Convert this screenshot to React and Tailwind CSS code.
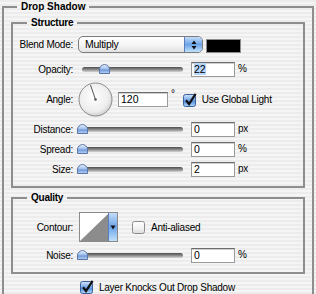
function Thumb({ left }) {
  return (
    <svg
      className="absolute top-[2px]"
      style={{ left }}
      width="11"
      height="10"
      viewBox="0 0 11 10"
    >
      <defs>
        <linearGradient id="thumb" x1="0" y1="0" x2="0" y2="1">
          <stop offset="0" stopColor="#eef4fc" />
          <stop offset="0.5" stopColor="#9dbdec" />
          <stop offset="0.6" stopColor="#6f98d8" />
          <stop offset="1" stopColor="#bcd6f6" />
        </linearGradient>
      </defs>
      <path
        d="M5.5 0.5 C8 0.5 10.5 3 10.5 5 V9.5 H0.5 V5 C0.5 3 3 0.5 5.5 0.5 Z"
        fill="url(#thumb)"
        stroke="#5a76a6"
      />
    </svg>
  );
}

function Slider({ value = 0 }) {
  return (
    <div className="relative ml-[4px] h-[15px] w-[111px] shrink-0">
      <div className="absolute left-[5px] right-[5px] top-[5px] h-[5px] rounded-full bg-gradient-to-b from-[#4e4e4e] via-[#8a8a8a] to-[#d6d6d6]" />
      <Thumb left={value} />
    </div>
  );
}

function Field({ value, w = "w-[44px]", selected, className = "" }) {
  return (
    <div
      className={`h-[15px] shrink-0 border border-[#9a9a9a] border-t-[#6c6c6c] bg-white pl-[2px] text-[10.5px] leading-[13px] tracking-normal text-black shadow-[inset_0_1px_0_#cfcfcf] ${w} ${className}`}
    >
      {selected ? <span className="bg-[#b5d5fd]">{value}</span> : value}
    </div>
  );
}

function Check({ checked, className = "" }) {
  return (
    <svg className={`shrink-0 ${className}`} width="14" height="14" viewBox="0 0 14 14">
      <defs>
        <linearGradient id="cbon" x1="0" y1="0" x2="0" y2="1">
          <stop offset="0" stopColor="#d3e5fb" />
          <stop offset="0.5" stopColor="#6fa3e6" />
          <stop offset="0.55" stopColor="#4f8ad9" />
          <stop offset="1" stopColor="#b4dafb" />
        </linearGradient>
        <linearGradient id="cboff" x1="0" y1="0" x2="0" y2="1">
          <stop offset="0" stopColor="#ffffff" />
          <stop offset="0.55" stopColor="#f2f2f2" />
          <stop offset="1" stopColor="#dcdcdc" />
        </linearGradient>
      </defs>
      <rect
        x="0.5"
        y="1.5"
        width="12"
        height="12"
        rx="2"
        fill={checked ? "url(#cbon)" : "url(#cboff)"}
        stroke={checked ? "#3d5f99" : "#8c8c8c"}
      />
      {checked && (
        <path d="M3 7.2 L6 11 L12.6 0.8" fill="none" stroke="#111" strokeWidth="2.2" />
      )}
    </svg>
  );
}

function Row({ label, className = "", children }) {
  return (
    <div className={`flex items-center ${className}`}>
      <span className="w-[60px] shrink-0 text-right">{label}</span>
      {children}
    </div>
  );
}

function Dial() {
  return (
    <svg className="ml-[5px] shrink-0" width="35" height="35" viewBox="0 0 35 35">
      <defs>
        <radialGradient id="dial" cx="0.45" cy="0.42" r="0.6">
          <stop offset="0" stopColor="#ffffff" />
          <stop offset="0.75" stopColor="#ededed" />
          <stop offset="1" stopColor="#cbcbcb" />
        </radialGradient>
      </defs>
      <circle cx="17.5" cy="17.5" r="16.5" fill="url(#dial)" stroke="#8a8a8a" />
      <line x1="17.5" y1="17.5" x2="12.5" y2="3" stroke="#555" strokeWidth="1" />
      <circle cx="17.5" cy="17.5" r="1.3" fill="#555" />
    </svg>
  );
}

function Popup() {
  return (
    <div className="ml-[5px] flex h-[17px] w-[125px] shrink-0 overflow-hidden rounded-[5px] border border-[#7c7c7c] bg-gradient-to-b from-white via-[#f6f6f6] to-[#e2e2e2]">
      <span className="flex-1 pl-[6px] text-[10.5px] leading-[15px]">Multiply</span>
      <span className="flex w-[18px] items-center justify-center border-l border-[#5a7fbd] bg-gradient-to-b from-[#c4ddf8] via-[#6ba3e8] to-[#c0e2fb]">
        <svg width="6" height="10" viewBox="0 0 6 10">
          <path d="M3 0.5 L5.5 4 H0.5 Z M3 9.5 L5.5 6 H0.5 Z" fill="#111" />
        </svg>
      </span>
    </div>
  );
}

function Contour() {
  return (
    <div className="ml-[6px] flex h-[30px] w-[39px] shrink-0 border border-[#8a8a8a]">
      <svg width="28" height="28" viewBox="0 0 28 28">
        <rect width="28" height="28" fill="#fff" />
        <path d="M0 28 L28 1 V28 Z" fill="#8c8c8c" />
      </svg>
      <span className="flex flex-1 items-center justify-center border-l border-[#5a7fbd] bg-gradient-to-b from-[#c4ddf8] via-[#6ba3e8] to-[#c0e2fb]">
        <svg width="6" height="5" viewBox="0 0 6 5">
          <path d="M0.5 0.5 H5.5 L3 4.5 Z" fill="#111" />
        </svg>
      </span>
    </div>
  );
}

export default function App() {
  return (
    <div className="h-[294px] w-[316px] overflow-hidden bg-[repeating-linear-gradient(180deg,#ececec_0px,#ececec_2px,#f5f5f5_2px,#f5f5f5_4px)] font-['Lucida_Grande','Liberation_Sans',Arial,sans-serif] text-[10px] leading-[13px] tracking-[-0.25px] text-black">
      <fieldset className="ml-[2px] h-[320px] w-[312px] border-2 border-b-0 border-[#8e8e8e] px-[7px] pt-[3px]">
        <legend className="ml-[6px] px-[4px] font-bold leading-[13px] tracking-normal">Drop Shadow</legend>

        <fieldset className="border-2 border-[#8e8e8e] pb-[9px] pt-[7px]">
          <legend className="ml-[14px] px-[4px] font-bold leading-[13px]">Structure</legend>

          <Row label="Blend Mode:" className="h-[17px]">
            <Popup />
            <div className="ml-[3px] mt-[3px] h-[14px] w-[35px] border border-[#8c8c8c] bg-black" />
          </Row>

          <Row label="Opacity:" className="mt-[9px] h-[15px]">
            <Slider value={22} />
            <Field value="22" selected className="ml-[3px]" />
            <span className="ml-[3px] -mt-[3px]">%</span>
          </Row>

          <Row label="Angle:" className="mt-[5px] h-[35px]">
            <Dial />
            <Field value="120" w="w-[50px]" className="ml-[5px]" />
            <span className="ml-[3px] -mt-[12px]">°</span>
            <Check checked className="ml-[8px]" />
            <span className="ml-[5px]">Use Global Light</span>
          </Row>

          <Row label="Distance:" className="mt-[5px] h-[15px]">
            <Slider value={0} />
            <Field value="0" className="ml-[3px]" />
            <span className="ml-[3px] -mt-[3px]">px</span>
          </Row>

          <Row label="Spread:" className="mt-[5px] h-[15px]">
            <Slider value={0} />
            <Field value="0" className="ml-[3px]" />
            <span className="ml-[3px] -mt-[3px]">%</span>
          </Row>

          <Row label="Size:" className="mt-[5px] h-[15px]">
            <Slider value={0} />
            <Field value="2" className="ml-[3px]" />
            <span className="ml-[3px] -mt-[3px]">px</span>
          </Row>
        </fieldset>

        <fieldset className="mt-[3px] border-2 border-[#8e8e8e] pb-[9px] pt-[8px]">
          <legend className="ml-[14px] px-[4px] font-bold leading-[13px]">Quality</legend>

          <Row label="Contour:" className="h-[30px]">
            <Contour />
            <Check className="ml-[14px]" />
            <span className="ml-[5px]">Anti-aliased</span>
          </Row>

          <Row label="Noise:" className="mt-[6px] h-[15px]">
            <Slider value={0} />
            <Field value="0" className="ml-[3px]" />
            <span className="ml-[3px] -mt-[3px]">%</span>
          </Row>
        </fieldset>

        <div className="mt-[6px] flex items-center pl-[69px]">
          <Check checked />
          <span className="ml-[5px]">Layer Knocks Out Drop Shadow</span>
        </div>
      </fieldset>
    </div>
  );
}
